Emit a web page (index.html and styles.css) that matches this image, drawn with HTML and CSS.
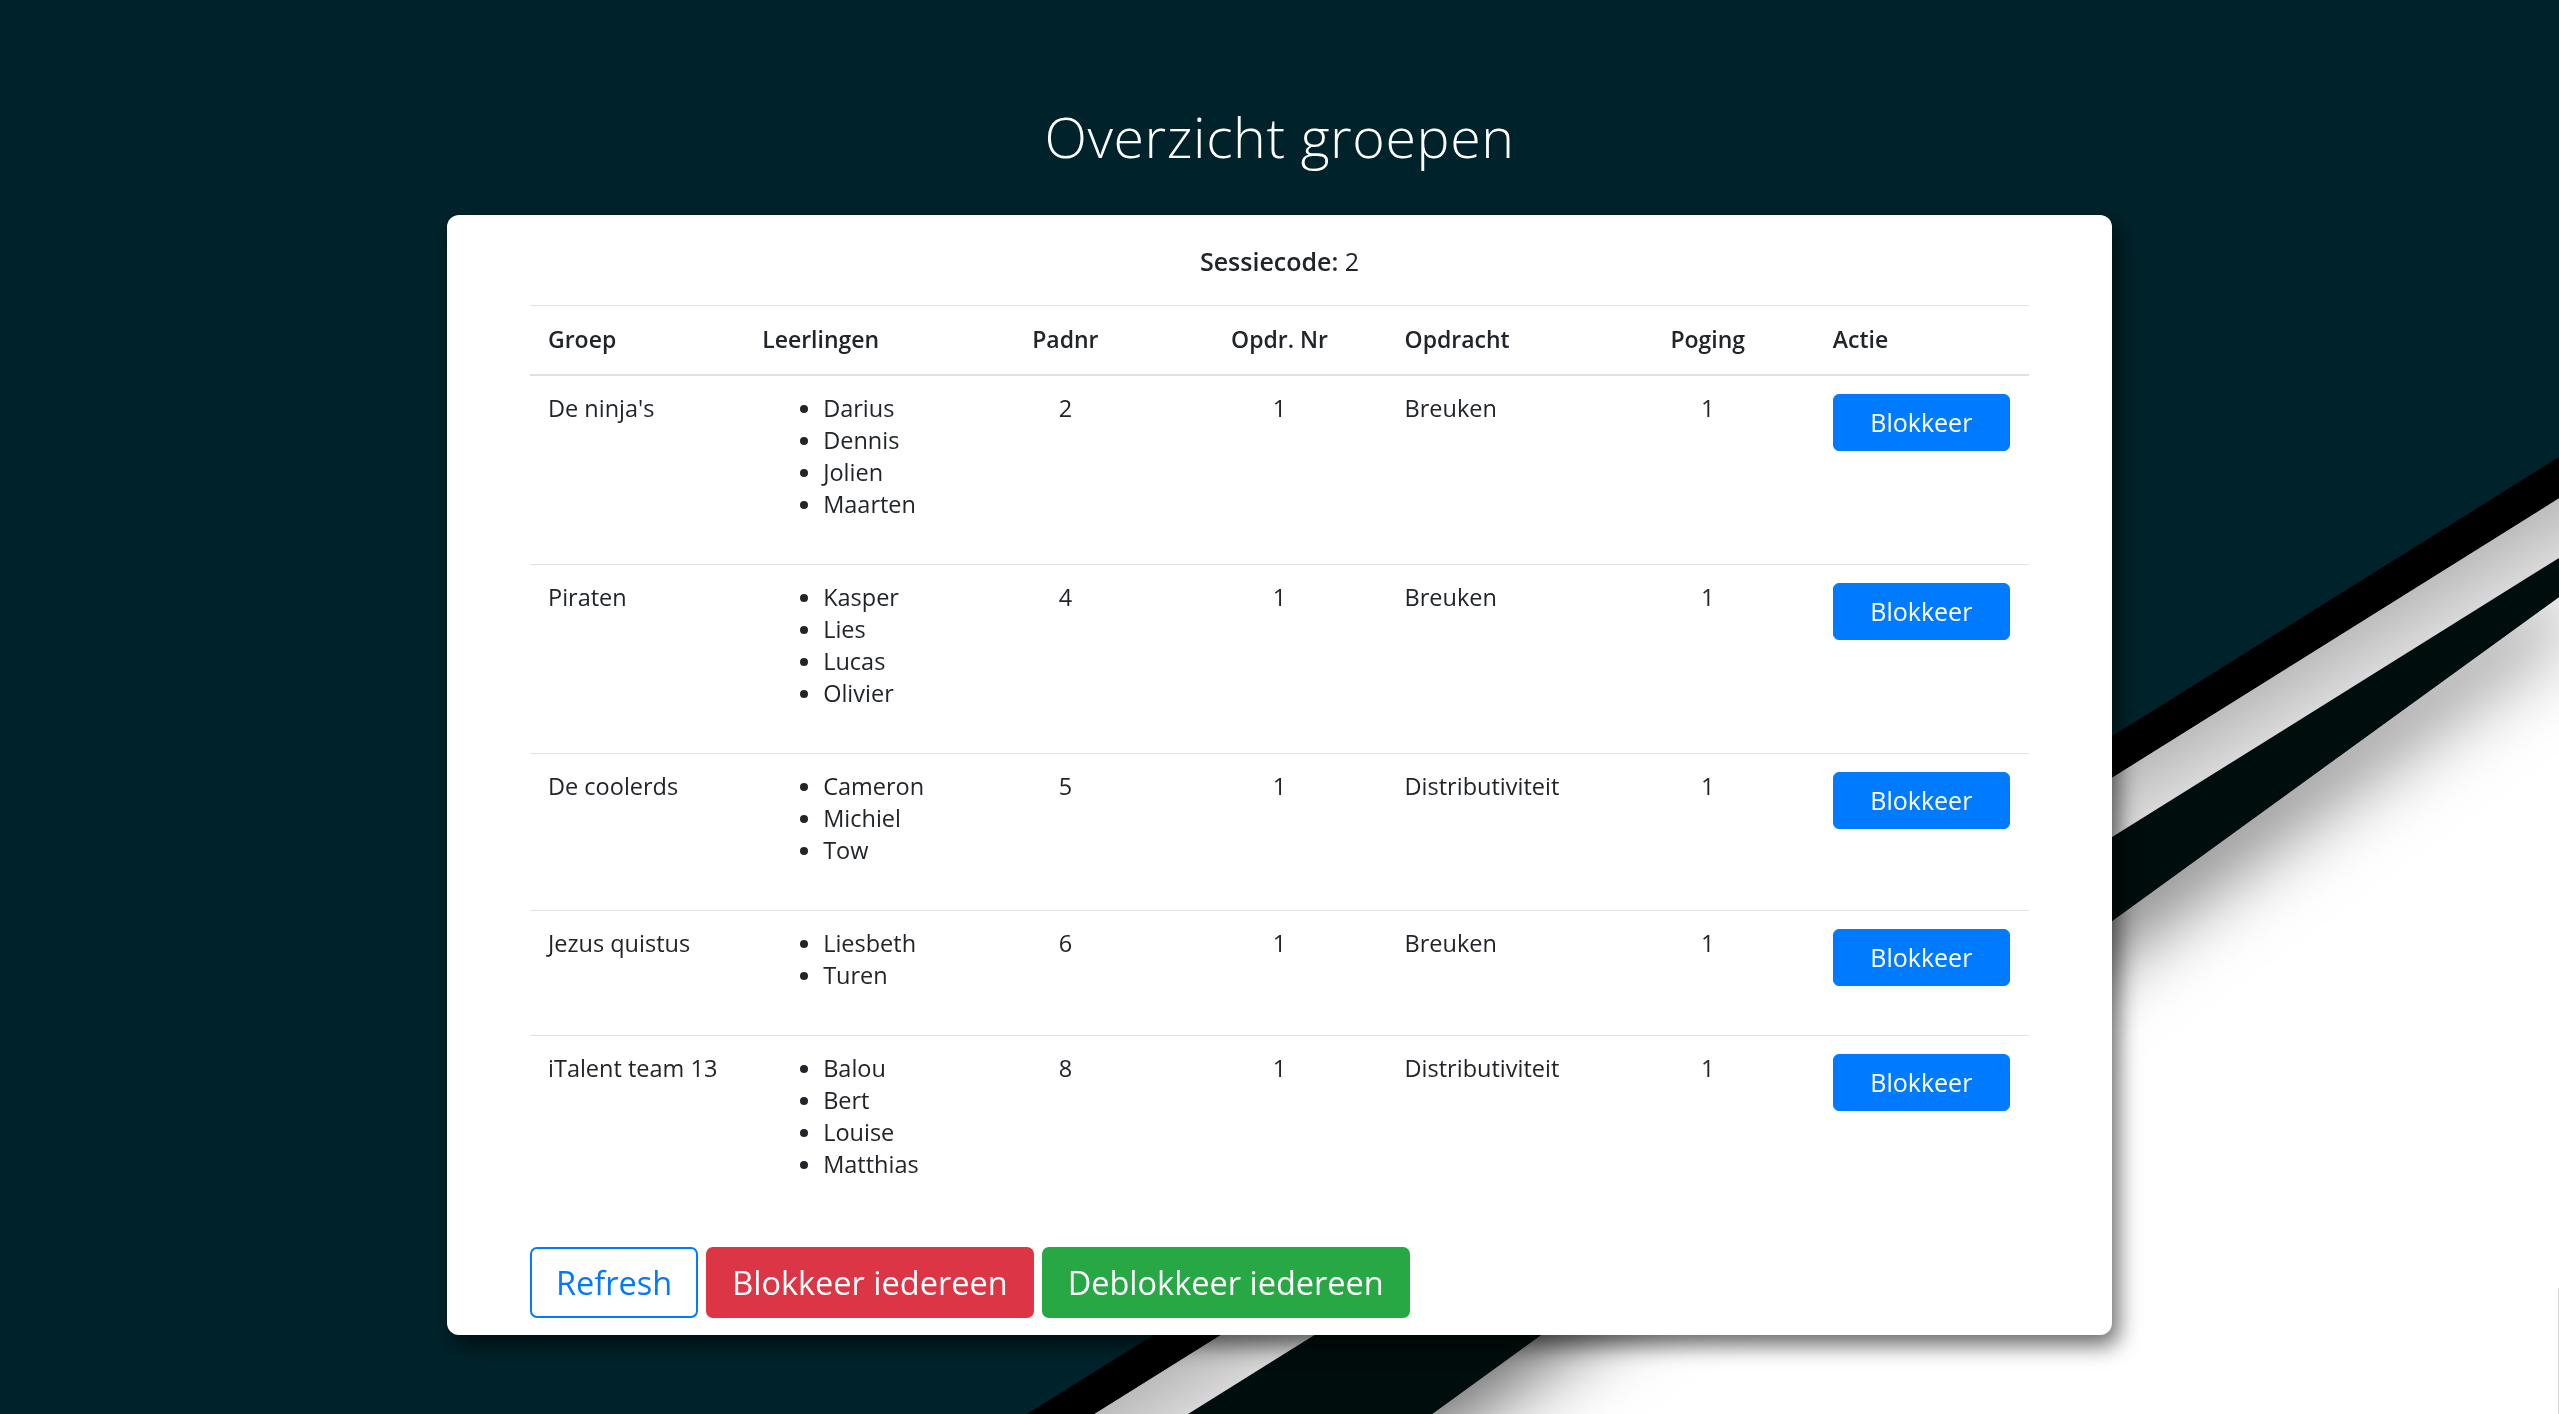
FILE: index.html
```html
<!DOCTYPE html>
<html lang="nl">
<head>
<meta charset="utf-8">
<title>Overzicht groepen</title>
<link rel="stylesheet" href="styles.css">
</head>
<body>
<svg class="backdrop" viewBox="0 0 2559 1414" preserveAspectRatio="none" aria-hidden="true">
  <defs>
    <linearGradient id="grayband" gradientUnits="userSpaceOnUse" x1="1800" y1="972" x2="1827" y2="1015">
      <stop offset="0" stop-color="#bcbcbc"/>
      <stop offset="1" stop-color="#d8d8d8"/>
    </linearGradient>
    <filter id="bandshadow" x="-20%" y="-20%" width="140%" height="150%">
      <feDropShadow dx="0" dy="30" stdDeviation="40" flood-color="#000" flood-opacity="0.6"/>
    </filter>
  </defs>
  <rect x="0" y="0" width="2559" height="1414" fill="#00232b"/>
  <polygon points="2559,597 2559,1414 1432,1414" fill="#ffffff"/>
  <polygon points="2559,558 2559,597 1432,1414 1188,1414" fill="#020e11" filter="url(#bandshadow)"/>
  <polygon points="2559,498 2559,558 1188,1414 1094,1414" fill="url(#grayband)"/>
  <polygon points="2559,457 2559,498 1094,1414 1027,1414" fill="#000000"/>
  <line x1="2558.5" y1="1288" x2="2558.5" y2="1414" stroke="#d6d6d6" stroke-width="1"/>
</svg>

<main class="page">
  <h1 class="title">Overzicht groepen</h1>
  <section class="card">
    <p class="session"><strong>Sessiecode:</strong> 2</p>
    <table class="groups">
      <thead>
        <tr>
          <th>Groep</th>
          <th>Leerlingen</th>
          <th class="mid">Padnr</th>
          <th class="mid">Opdr. Nr</th>
          <th>Opdracht</th>
          <th class="mid">Poging</th>
          <th>Actie</th>
        </tr>
      </thead>
      <tbody>
        <tr>
          <td>De ninja's</td>
          <td><ul class="names"><li>Darius</li><li>Dennis</li><li>Jolien</li><li>Maarten</li></ul></td>
          <td class="mid">2</td>
          <td class="mid">1</td>
          <td>Breuken</td>
          <td class="mid">1</td>
          <td class="action"><button class="btn btn-block">Blokkeer</button></td>
        </tr>
        <tr>
          <td>Piraten</td>
          <td><ul class="names"><li>Kasper</li><li>Lies</li><li>Lucas</li><li>Olivier</li></ul></td>
          <td class="mid">4</td>
          <td class="mid">1</td>
          <td>Breuken</td>
          <td class="mid">1</td>
          <td class="action"><button class="btn btn-block">Blokkeer</button></td>
        </tr>
        <tr>
          <td>De coolerds</td>
          <td><ul class="names"><li>Cameron</li><li>Michiel</li><li>Tow</li></ul></td>
          <td class="mid">5</td>
          <td class="mid">1</td>
          <td>Distributiviteit</td>
          <td class="mid">1</td>
          <td class="action"><button class="btn btn-block">Blokkeer</button></td>
        </tr>
        <tr>
          <td>Jezus quistus</td>
          <td><ul class="names"><li>Liesbeth</li><li>Turen</li></ul></td>
          <td class="mid">6</td>
          <td class="mid">1</td>
          <td>Breuken</td>
          <td class="mid">1</td>
          <td class="action"><button class="btn btn-block">Blokkeer</button></td>
        </tr>
        <tr>
          <td>iTalent team 13</td>
          <td><ul class="names"><li>Balou</li><li>Bert</li><li>Louise</li><li>Matthias</li></ul></td>
          <td class="mid">8</td>
          <td class="mid">1</td>
          <td>Distributiviteit</td>
          <td class="mid">1</td>
          <td class="action"><button class="btn btn-block">Blokkeer</button></td>
        </tr>
      </tbody>
    </table>
    <div class="actions">
      <button class="btn btn-lg btn-outline">Refresh</button>
      <button class="btn btn-lg btn-red">Blokkeer iedereen</button>
      <button class="btn btn-lg btn-green">Deblokkeer iedereen</button>
    </div>
  </section>
</main>
</body>
</html>
```

FILE: styles.css
```css
html, body {
  margin: 0;
  padding: 0;
}

body {
  background: #00232b;
  font-family: "Open Sans", "Noto Sans", sans-serif;
  color: #212529;
  min-height: 100vh;
  overflow: hidden;
}

.backdrop {
  position: fixed;
  top: 0;
  left: 0;
  width: 100vw;
  height: 100vh;
  z-index: 0;
  display: block;
}

.page {
  position: relative;
  z-index: 1;
  padding-top: 104px;
}

.title {
  margin: 0 0 46px;
  text-align: center;
  color: #ffffff;
  font-weight: 300;
  font-size: 55.5px;
  letter-spacing: 0.6px;
  line-height: 65px;
}

.card {
  width: 1665px;
  margin: 0 auto;
  box-sizing: border-box;
  padding: 28px 83px 17px;
  background: #ffffff;
  border-radius: 12px;
  box-shadow: 6px 10px 22px rgba(0, 0, 0, 0.6);
}

.session {
  margin: 0 0 26px;
  text-align: center;
  font-size: 25px;
  line-height: 36px;
}

.session strong {
  font-weight: 600;
}

.groups {
  width: 100%;
  table-layout: fixed;
  border-collapse: separate;
  border-spacing: 0;
  font-size: 23.5px;
  line-height: 32px;
}

.groups th {
  text-align: left;
  font-weight: 600;
  font-size: 23px;
  padding: 17px 18px 19px;
  border-top: 1px solid #dee2e6;
  border-bottom: 2px solid #dee2e6;
  vertical-align: bottom;
}

.groups td {
  text-align: left;
  padding: 16px 18px 20px;
  border-top: 1px solid #dee2e6;
  vertical-align: top;
}

.groups td.action {
  padding-top: 18px;
  padding-bottom: 18px;
}

.groups tbody tr:first-child td {
  border-top: 0;
}

.groups .mid {
  text-align: center;
}

.names {
  margin: 0 0 24px;
  padding-left: 61px;
  list-style: disc;
}

.btn {
  display: inline-block;
  font-family: inherit;
  color: #ffffff;
  border: 1px solid transparent;
  cursor: pointer;
  text-align: center;
}

.btn-block {
  box-sizing: border-box;
  width: 177px;
  height: 57px;
  padding: 0 12px;
  font-size: 25px;
  line-height: 55px;
  background: #007bff;
  border-color: #007bff;
  border-radius: 6px;
}

.actions {
  display: flex;
  gap: 8px;
  margin-top: 23px;
}

.btn-lg {
  box-sizing: border-box;
  height: 71px;
  padding: 0 24px;
  font-size: 32.5px;
  line-height: 67px;
  border-width: 2px;
  border-radius: 7px;
}

.btn-outline {
  background: #ffffff;
  color: #007bff;
  border-color: #007bff;
}

.btn-red {
  background: #dc3545;
  border-color: #dc3545;
}

.btn-green {
  background: #28a745;
  border-color: #28a745;
}
```
